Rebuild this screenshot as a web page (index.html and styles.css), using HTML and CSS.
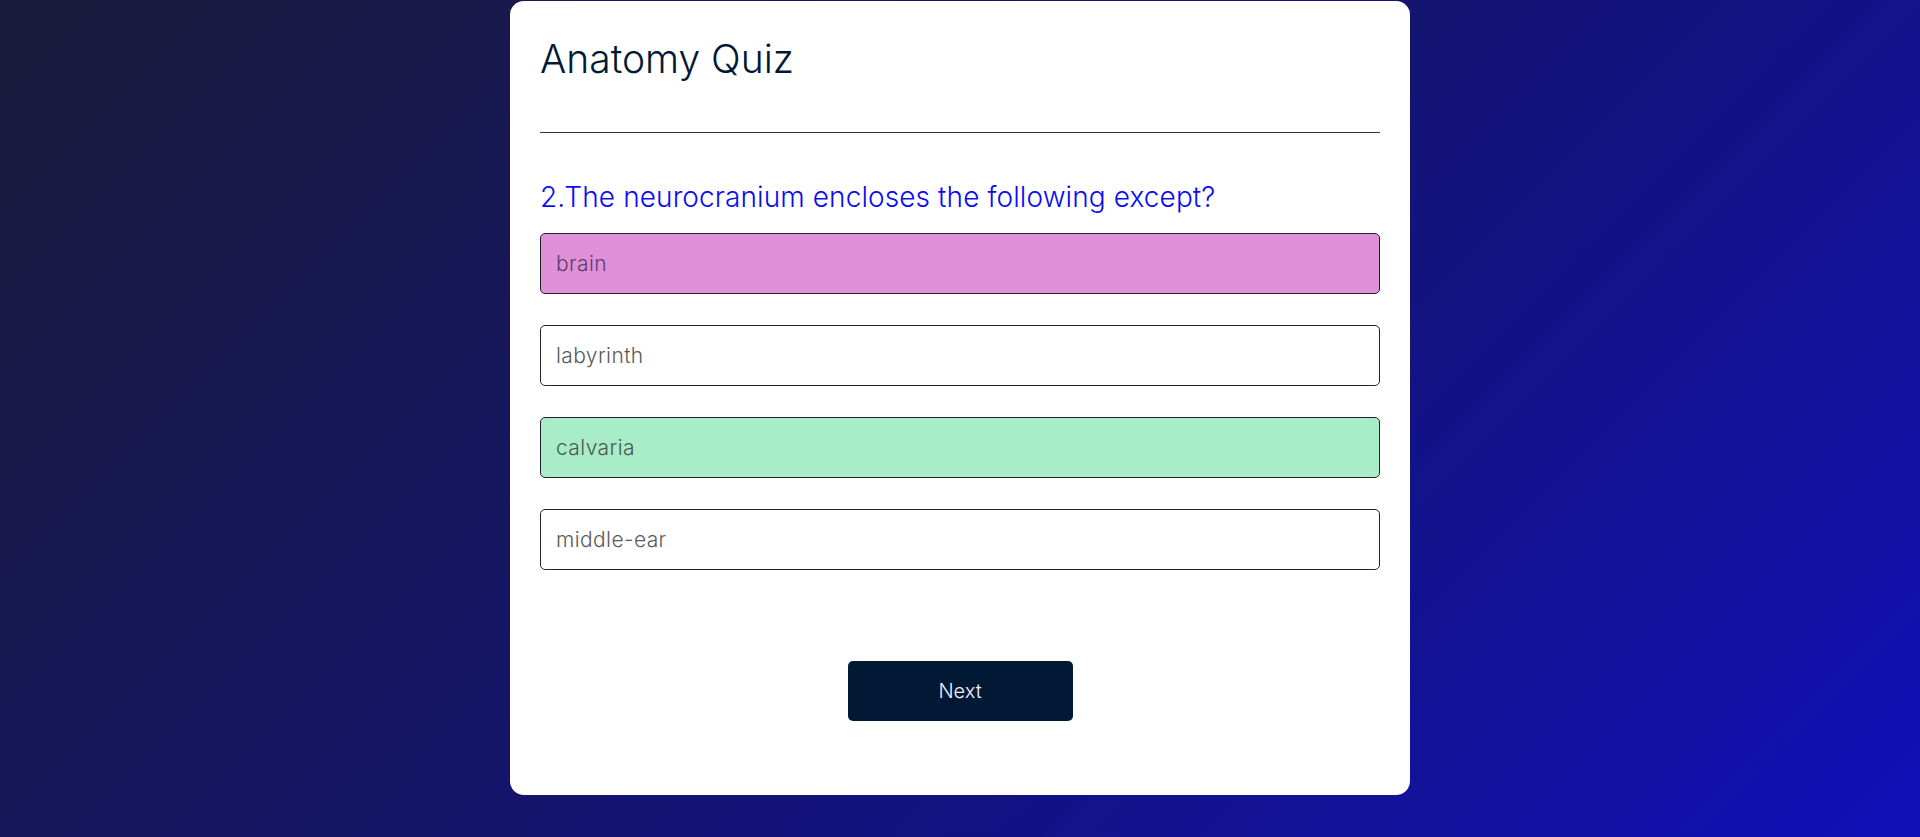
FILE: index.html
```html
<!DOCTYPE html>
<html lang="en">
<head>
<meta charset="utf-8">
<title>Anatomy Quiz</title>
<link rel="stylesheet" href="styles.css">
</head>
<body>
<main class="page">
  <section class="card">
    <h1 class="title">Anatomy Quiz</h1>
    <hr class="divider">
    <h2 class="question">2.The neurocranium encloses the following except?</h2>
    <ul class="options">
      <li class="option option-wrong">brain</li>
      <li class="option">labyrinth</li>
      <li class="option option-right">calvaria</li>
      <li class="option">middle-ear</li>
    </ul>
    <div class="actions">
      <button class="next-btn" type="button">Next</button>
    </div>
  </section>
</main>
</body>
</html>
```

FILE: styles.css
```css
html, body {
  margin: 0;
  padding: 0;
  height: 100%;
}

body {
  background: linear-gradient(135deg, #1b1b3a 0%, #14146e 50%, #1010b8 100%);
  font-family: Inter, "Noto Sans", "Liberation Sans", sans-serif;
  font-weight: 300;
  overflow: hidden;
}

.page {
  display: flex;
  justify-content: center;
  padding-top: 1px;
}

.card {
  width: 900px;
  box-sizing: border-box;
  background: #ffffff;
  border-radius: 14px;
  padding: 34px 30px 74px;
  display: flex;
  flex-direction: column;
}

.title {
  margin: 0;
  font-size: 39px;
  line-height: 48px;
  font-weight: 300;
  color: #021936;
}

.divider {
  border: 0;
  height: 1px;
  background: #333333;
  margin: 49px 0 0;
}

.question {
  margin: 46px 0 0;
  font-size: 28px;
  line-height: 36px;
  font-weight: 300;
  color: #0c0cf2;
  letter-spacing: 0.1px;
}

.options {
  list-style: none;
  margin: 17.5px 0 0;
  padding: 0;
  display: flex;
  flex-direction: column;
  gap: 31px;
}

.option {
  height: 61px;
  box-sizing: border-box;
  border: 1px solid #222222;
  border-radius: 5px;
  padding: 0 15px;
  display: flex;
  align-items: center;
  font-size: 21px;
  letter-spacing: 0.4px;
  color: #5a5a5a;
  background: #ffffff;
}

.option-wrong {
  background: #e090d9;
  color: #5a3f66;
}

.option-right {
  background: #a8edc7;
  color: #4a5a52;
}

.actions {
  display: flex;
  justify-content: center;
  margin-top: 91px;
}

.next-btn {
  width: 225px;
  height: 60px;
  border: 0;
  border-radius: 5px;
  background: #021936;
  color: #f4f0ff;
  font-family: inherit;
  font-weight: 300;
  font-size: 20px;
  cursor: pointer;
}
```
